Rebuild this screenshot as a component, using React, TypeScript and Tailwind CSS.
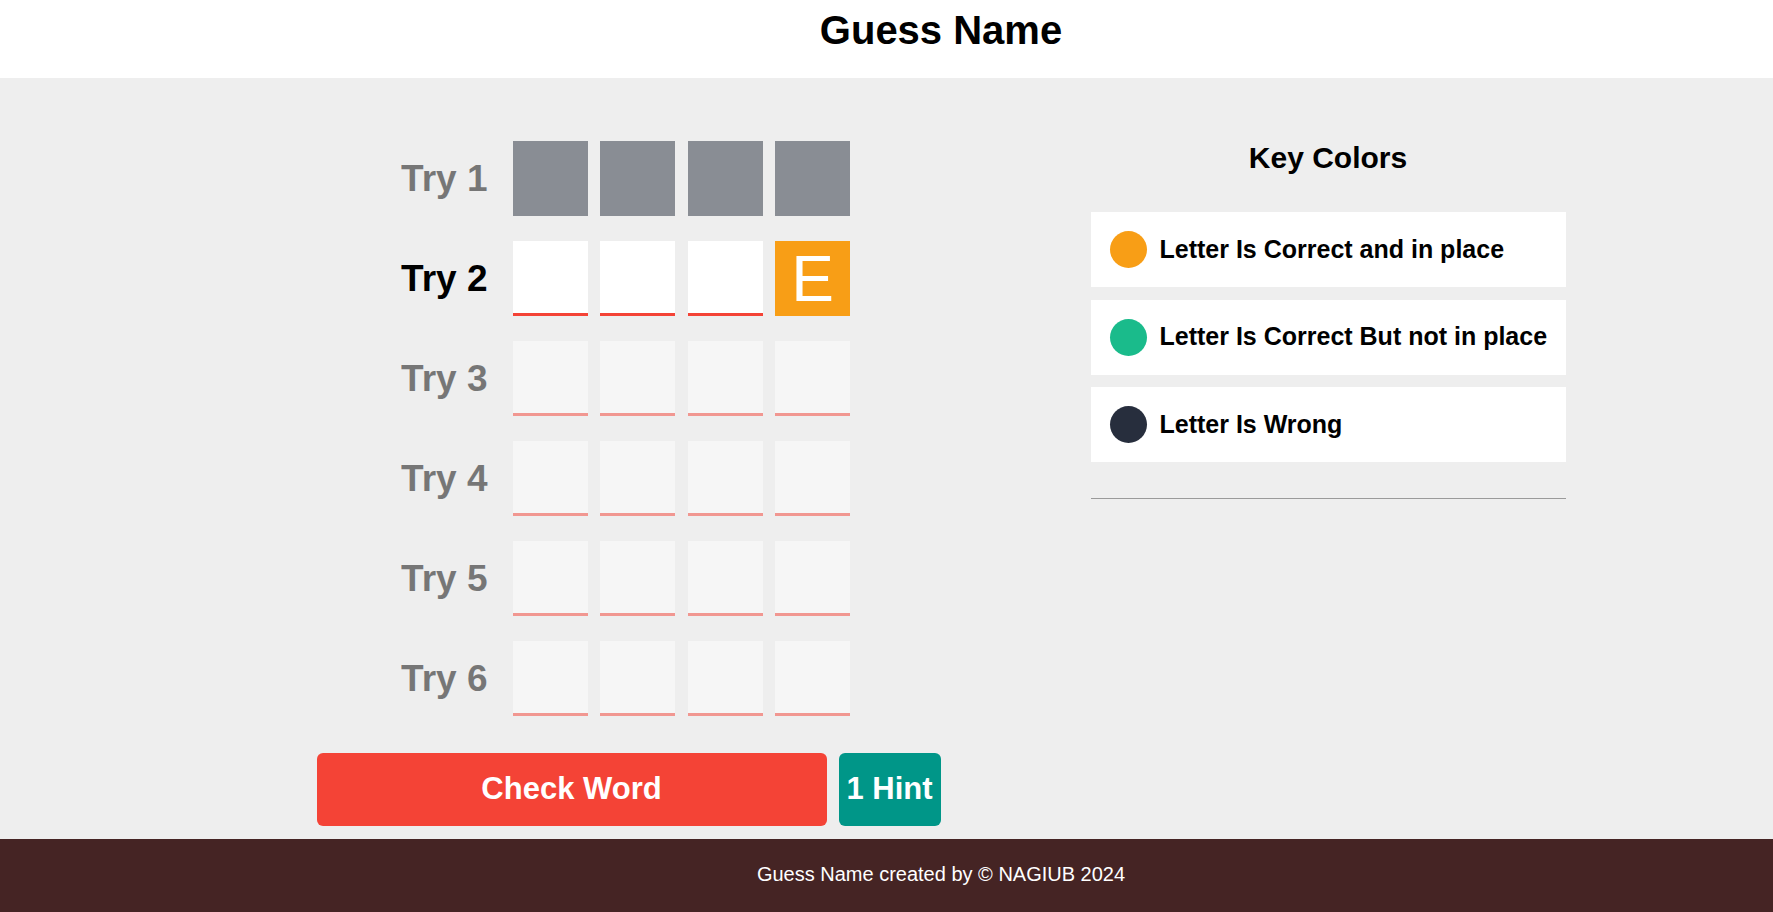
import React from "react";

const tries = [1, 2, 3, 4, 5, 6];

const legend = [
  { color: "bg-[#f89e16]", text: "Letter Is Correct and in place" },
  { color: "bg-[#1abb8b]", text: "Letter Is Correct But not in place" },
  { color: "bg-[#272e3d]", text: "Letter Is Wrong" },
];

function Cell({ state, letter }: { state: "wrong" | "empty" | "inPlace"; letter?: string }) {
  if (state === "wrong") {
    return <div className="w-[75px] h-[75px] bg-[#272e3d]" />;
  }
  if (state === "inPlace") {
    return (
      <div className="w-[75px] h-[75px] bg-[#f89e16] flex items-center justify-center text-white text-[64px] leading-none">
        {letter}
      </div>
    );
  }
  return <div className="w-[75px] h-[75px] bg-white border-b-[3px] border-[#f44336]" />;
}

function TryRow({ n }: { n: number }) {
  const done = n === 1;
  const current = n === 2;
  return (
    <div className={`flex items-center pl-[71px] ${current ? "" : "opacity-50"}`}>
      <div className="w-[100px] mr-[25px] text-right text-[37px] font-bold text-black leading-[42px]">
        Try {n}
      </div>
      <div className="flex gap-[12.5px]">
        {[0, 1, 2, 3].map((i) => {
          if (done) return <Cell key={i} state="wrong" />;
          if (current && i === 3) return <Cell key={i} state="inPlace" letter="E" />;
          return <Cell key={i} state="empty" />;
        })}
      </div>
    </div>
  );
}

export default function App() {
  return (
    <div className="min-h-screen flex flex-col bg-white" style={{ fontFamily: '"Liberation Sans", Arial, sans-serif' }}>
      {/* header */}
      <header className="h-[78px] bg-white pl-[109px] pt-[7px] text-center">
        <h1 className="text-[40px] font-bold leading-[46px] text-black">Guess Name</h1>
      </header>

      {/* game */}
      <main className="bg-[#eeeeee] pl-[109px] pt-[63px] pb-[13px] flex justify-center">
        <div className="flex gap-[150px] items-start">
          <div className="w-[624px] flex flex-col">
            <div className="flex flex-col gap-[25px]">
              {tries.map((n) => (
                <TryRow key={n} n={n} />
              ))}
            </div>
            <div className="flex gap-[12px] mt-[37px]">
              <button className="w-[510px] h-[73px] rounded-[6px] bg-[#f44336] text-white text-[31px] font-bold">
                Check Word
              </button>
              <button className="w-[102px] h-[73px] rounded-[6px] bg-[#009688] text-white text-[31px] font-bold">
                1 Hint
              </button>
            </div>
          </div>

          <div className="w-[475px] flex flex-col">
            <h2 className="text-[30px] font-bold leading-[34px] text-center text-black">Key Colors</h2>
            <div className="flex flex-col gap-[12.5px] mt-[37px]">
              {legend.map((l) => (
                <div key={l.text} className="h-[75px] bg-white flex items-center pl-[19px]">
                  <span className={`w-[37px] h-[37px] rounded-full ${l.color}`} />
                  <span className="ml-[13px] text-[25px] font-bold text-black">{l.text}</span>
                </div>
              ))}
            </div>
            <div className="mt-[36px] h-px bg-[#9a9a9a]" />
          </div>
        </div>
      </main>

      {/* footer */}
      <footer className="bg-[#452424] pl-[109px] pt-[24px] pb-[26px] text-center text-white text-[20px] leading-[23px]">
        Guess Name created by © NAGIUB 2024
      </footer>
    </div>
  );
}
